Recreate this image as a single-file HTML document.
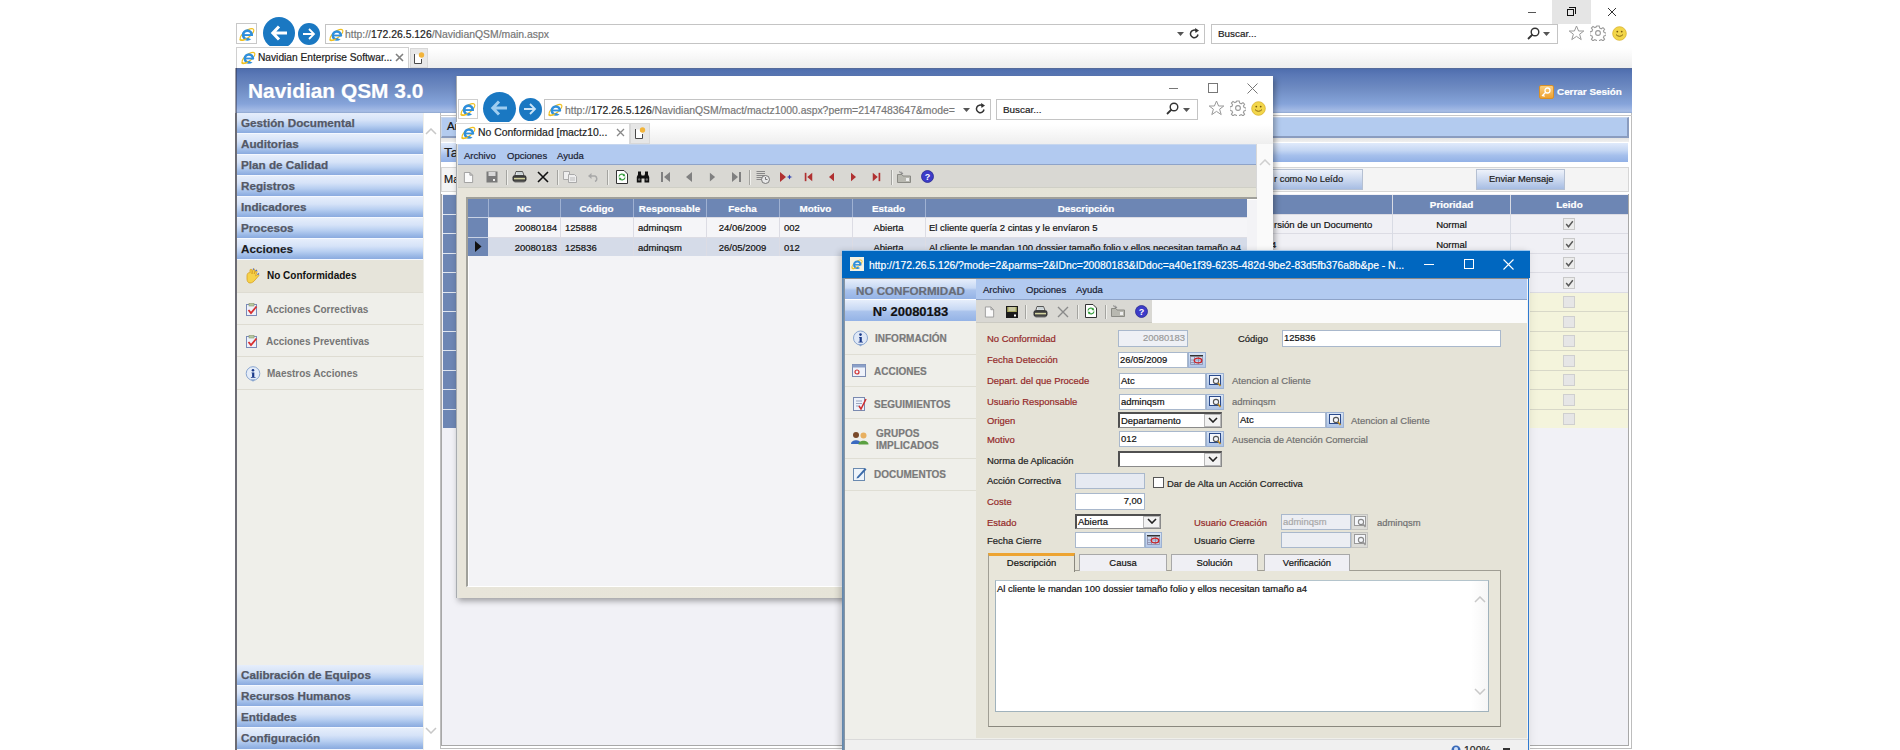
<!DOCTYPE html>
<html><head><meta charset="utf-8">
<style>
*{margin:0;padding:0;box-sizing:border-box}
html,body{width:1900px;height:750px;overflow:hidden;background:#fff;font-family:"Liberation Sans",sans-serif;position:relative}
.a{position:absolute}
.t{position:absolute;white-space:nowrap;-webkit-text-stroke:.2px currentColor}
svg{display:block}
/* main window */
#main{left:236px;top:0;width:1396px;height:750px;background:#fff}
.addr{border:1px solid #c4c4c4;background:#fff}
.circ{border-radius:50%;background:#1a78c2}
.sb{left:1px;width:186px;height:21px;background:linear-gradient(#e6eefb 0%,#d6e3f8 35%,#b8cff1 62%,#9ab8e6 85%,#8aaadf 100%);border-bottom:1px solid #f4f8ff}
.sb span{position:absolute;left:4px;top:3px;font-size:11.7px;font-weight:bold;color:#535866;-webkit-text-stroke:.25px #535866}
.sub{left:1px;width:186px;height:32px;background:#efefea;border-bottom:1px solid #dedcd2}
.sub span{position:absolute;left:29px;top:11px;font-size:10px;font-weight:bold;color:#767676}
</style></head><body>
<svg width="0" height="0" style="position:absolute">
<defs>
<mask id="iem" maskUnits="userSpaceOnUse" x="0" y="0" width="16" height="16"><rect width="16" height="16" fill="#fff"/><path d="M8.8 10.1H16V15L9.8 12.2Z" fill="#000"/></mask>
<symbol id="ie" viewBox="0 0 16 16">
<ellipse cx="8" cy="8.3" rx="8.2" ry="3.4" transform="rotate(-38 8 8.3)" fill="none" stroke="#f0c020" stroke-width="1.2"/>
<g mask="url(#iem)"><circle cx="8.4" cy="9" r="4.3" fill="none" stroke="#2f8fdc" stroke-width="2.7"/></g>
<rect x="4.6" y="8.1" width="8" height="1.9" fill="#2f8fdc"/>
<path d="M.6 13.2C1.5 15.2 4.5 14.6 7.5 12.6" fill="none" stroke="#f0c020" stroke-width="1.3"/>
</symbol>

<symbol id="i-new" viewBox="0 0 12 12"><path d="M1.5 .5H7.5L10.5 3.5V11.5H1.5Z M7.5 .5V3.5H10.5" fill="#fafafa" stroke="#9a9a9a" stroke-width="1"/></symbol>
<symbol id="i-save" viewBox="0 0 12 12"><rect x=".5" y=".5" width="11" height="11" fill="#7a7a7a"/><rect x="2.5" y="1" width="7" height="4" fill="#d8d8d8"/><rect x="7" y="8" width="2" height="2" fill="#eee"/></symbol>
<symbol id="i-saveg" viewBox="0 0 12 12"><rect x="0" y="0" width="12" height="12" fill="#1a1a1a"/><rect x="1.2" y="1" width="9.6" height="5" fill="#a8a860"/><rect x="2.5" y="1" width="7" height="4" fill="#c8c8a0"/><rect x="8" y="8.5" width="2" height="2" fill="#fff"/></symbol>
<symbol id="i-print" viewBox="0 0 15 12"><path d="M4 .5H10.5L12 4.5H2.8Z" fill="#eef0f4" stroke="#333" stroke-width=".8"/><path d="M5 1.8H10M4.6 3H10.6" stroke="#9aa" stroke-width=".6"/><rect x=".5" y="4.2" width="14" height="6.6" rx="2.2" fill="#3a3a3a"/><rect x="2" y="6.8" width="11" height="1.6" fill="#d4d4a0"/><rect x="2.5" y="9.6" width="10" height="1.8" fill="#5a5a5a"/></symbol>
<symbol id="i-x" viewBox="0 0 12 12"><path d="M1 1L11 11M11 1L1 11" stroke="#111" stroke-width="1.6"/></symbol>
<symbol id="i-xg" viewBox="0 0 12 12"><path d="M1 1L11 11M11 1L1 11" stroke="#8a8a8a" stroke-width="1.4"/></symbol>
<symbol id="i-copy" viewBox="0 0 14 12"><path d="M.5 .5H6.5V8.5H.5Z" fill="#eee" stroke="#aaa"/><path d="M5.5 3.5H11.5L13.5 5.5V11.5H5.5Z" fill="#eee" stroke="#aaa"/><path d="M7 7H12M7 9H12" stroke="#bbb"/></symbol>
<symbol id="i-undo" viewBox="0 0 11 9"><path d="M3 3H7A3 3 0 0 1 7 8.5" fill="none" stroke="#a8a8a8" stroke-width="1.5"/><path d="M0 3L3.5 0V6Z" fill="#a8a8a8"/></symbol>
<symbol id="i-refresh" viewBox="0 0 12 14"><path d="M.5 .5H8L11.5 4V13.5H.5Z" fill="#fff" stroke="#333"/><path d="M3 6.5A3 3 0 0 1 8.5 5.5M9 7.5A3 3 0 0 1 3.5 8.5" fill="none" stroke="#3aa040" stroke-width="1.3"/><path d="M8 3.5L9.5 6.5L6.5 6Z M4 10.5L2.5 7.5L5.5 8Z" fill="#3aa040"/></symbol>
<symbol id="i-bino" viewBox="0 0 14 12"><rect x="2" y=".5" width="3" height="3.5" fill="#111"/><rect x="9" y=".5" width="3" height="3.5" fill="#111"/><path d="M.8 11.5V6L2 3.5H5.5V11.5Z M13.2 11.5V6L12 3.5H8.5V11.5Z" fill="#111"/><rect x="5" y="4.5" width="4" height="3" fill="#111"/><circle cx="3.2" cy="8.5" r="1.2" fill="#666"/><circle cx="10.8" cy="8.5" r="1.2" fill="#666"/></symbol>
<symbol id="i-first" viewBox="0 0 9 12"><rect x="0" y="1" width="2" height="10" fill="#808080"/><path d="M9 1V11L3 6Z" fill="#808080"/></symbol><symbol id="r-first" viewBox="0 0 9 12"><rect x="0" y="1" width="2" height="10" fill="#b03030"/><path d="M9 1V11L3 6Z" fill="#b03030"/></symbol>
<symbol id="i-prev" viewBox="0 0 8 12"><path d="M7 1V11L1 6Z" fill="#808080"/></symbol><symbol id="r-prev" viewBox="0 0 8 12"><path d="M7 1V11L1 6Z" fill="#b03030"/></symbol>
<symbol id="i-next" viewBox="0 0 8 12"><path d="M1 1V11L7 6Z" fill="#808080"/></symbol><symbol id="r-next" viewBox="0 0 8 12"><path d="M1 1V11L7 6Z" fill="#b03030"/></symbol>
<symbol id="i-last" viewBox="0 0 9 12"><path d="M0 1V11L6 6Z" fill="#808080"/><rect x="7" y="1" width="2" height="10" fill="#808080"/></symbol><symbol id="r-last" viewBox="0 0 9 12"><path d="M0 1V11L6 6Z" fill="#b03030"/><rect x="7" y="1" width="2" height="10" fill="#b03030"/></symbol>
<symbol id="i-hist" viewBox="0 0 14 14"><path d="M.5 1.5H9M.5 3.5H9M.5 5.5H9M.5 7.5H6M.5 9.5H6" stroke="#888"/><circle cx="9.5" cy="9.5" r="4" fill="#e8e8e8" stroke="#777"/><path d="M9.5 7V9.5H11.5" fill="none" stroke="#777"/></symbol>
<symbol id="i-rnew" viewBox="0 0 14 12"><path d="M1 1V11L7 6Z" fill="#b03030"/><path d="M10.5 3.5L11.5 5.5L13.5 6L11.5 6.5L10.5 8.5L9.5 6.5L7.5 6L9.5 5.5Z" fill="#3040b0"/></symbol>
<symbol id="i-folder" viewBox="0 0 14 12"><path d="M.5 3.5H5L6 5H13.5V11.5H.5Z" fill="#b8b8b0" stroke="#8a8a84"/><path d="M2 .5L5 3M4 .5L6 3" stroke="#888"/><rect x="9" y="7" width="3" height="3" fill="#eee"/></symbol>
<symbol id="i-help" viewBox="0 0 13 13"><circle cx="6.5" cy="6.5" r="6" fill="#3c3cc8" stroke="#2a2a90" stroke-width=".8"/><text x="6.5" y="10" font-family="Liberation Sans" font-weight="bold" font-size="9" fill="#fff" text-anchor="middle">?</text></symbol>
</defs>
</svg>

<!-- ================= MAIN IE WINDOW ================= -->
<div id="main" class="a">
  <!-- window buttons -->
  <div class="a" style="left:1292px;top:12px;width:8px;height:1px;background:#555"></div>
  <div class="a" style="left:1316px;top:0;width:39px;height:24px;background:#e5e5e5"></div>
  <div class="a" style="left:1331px;top:9px;width:7px;height:7px;border:1px solid #111;background:#e5e5e5"></div>
  <div class="a" style="left:1333px;top:7px;width:7px;height:7px;border-top:1px solid #111;border-right:1px solid #111"></div>
  <svg class="a" style="left:1371px;top:7px" width="10" height="10"><path d="M1 1L9 9M9 1L1 9" stroke="#333" stroke-width="1"/></svg>
  <!-- toolbar -->
  <div class="a" style="left:0;top:23px;width:21px;height:21px;border:1px solid #c8c8c8;background:#fff"><svg class="a" style="left:2px;top:2px" width="16" height="16"><use href="#ie"/></svg></div>
  <div class="a circ" style="left:27px;top:17px;width:32px;height:32px"></div>
  <svg class="a" style="left:34px;top:24px" width="18" height="18"><path d="M9 2.5L2.8 9L9 15.5M3.2 9H17" fill="none" stroke="#fff" stroke-width="3"/></svg>
  <div class="a circ" style="left:62px;top:23px;width:22px;height:22px"></div>
  <svg class="a" style="left:66px;top:28px" width="14" height="12"><path d="M7 1L12 6L7 11M12 6H1" fill="none" stroke="#fff" stroke-width="1.8"/></svg>
  <div class="a addr" style="left:89px;top:24px;width:880px;height:20px"></div>
  <svg class="a" style="left:93px;top:27px" width="15" height="15"><use href="#ie"/></svg>
  <div class="t" style="left:109px;top:29px;font-size:10.4px;color:#777">http://<span style="color:#222">172.26.5.126</span>/NavidianQSM/main.aspx</div>
  <svg class="a" style="left:941px;top:32px" width="7" height="4"><path d="M0 0H7L3.5 4Z" fill="#555"/></svg>
  <svg class="a" style="left:953px;top:28px" width="11" height="12"><path d="M9 6.5A3.8 3.8 0 1 1 7.5 2.8" fill="none" stroke="#333" stroke-width="1.5"/><path d="M6 0L10 2.6L6.5 5Z" fill="#333"/></svg>
  <div class="a addr" style="left:975px;top:24px;width:347px;height:20px"></div>
  <div class="t" style="left:982px;top:28px;font-size:9.9px;color:#222">Buscar...</div>
  <svg class="a" style="left:1291px;top:27px" width="13" height="13"><circle cx="8" cy="5" r="3.8" fill="none" stroke="#333" stroke-width="1.4"/><path d="M5.5 7.5L1 12" stroke="#333" stroke-width="1.8"/></svg>
  <svg class="a" style="left:1307px;top:32px" width="7" height="4"><path d="M0 0H7L3.5 4Z" fill="#555"/></svg>
  <svg class="a" style="left:1332px;top:25px" width="17" height="16"><path d="M8.5 1L10.6 6H15.8L11.6 9.2L13.2 14.6L8.5 11.4L3.8 14.6L5.4 9.2L1.2 6H6.4Z" fill="none" stroke="#999" stroke-width="1"/></svg>
  <svg class="a" style="left:1354px;top:25px" width="16" height="16"><g fill="none" stroke="#999" stroke-width="1.1"><circle cx="8" cy="8" r="2.4"/><path d="M6.8 1h2.4l.4 2 1.6.8 1.8-1.2 1.6 1.6-1.2 1.8.8 1.6 2 .4v2.4l-2 .4-.8 1.6 1.2 1.8-1.6 1.6-1.8-1.2-1.6.8-.4 2H6.8l-.4-2-1.6-.8-1.8 1.2-1.6-1.6 1.2-1.8-.8-1.6-2-.4V6.8l2-.4.8-1.6L1.4 3l1.6-1.6 1.8 1.2 1.6-.8z"/></g></svg>
  <svg class="a" style="left:1376px;top:26px" width="15" height="15"><circle cx="7.5" cy="7.5" r="6.8" fill="#f2d64a" stroke="#d9b12a" stroke-width=".8"/><circle cx="5.3" cy="5.6" r=".9" fill="#7a5a10"/><circle cx="9.7" cy="5.6" r=".9" fill="#7a5a10"/><path d="M4 8.6Q7.5 12 11 8.6" fill="none" stroke="#7a5a10" stroke-width=".9"/></svg>
  <!-- tab -->
  <div class="a" style="left:0;top:46px;width:1396px;height:22px;background:linear-gradient(#fff 10%,#eeeeee)"></div>
  <div class="a" style="left:0;top:47px;width:173px;height:22px;border:1px solid #d0d0d0;border-bottom:none;background:#fff"></div>
  <svg class="a" style="left:5px;top:50px" width="15" height="15"><use href="#ie"/></svg>
  <div class="t" style="left:22px;top:52px;font-size:10.2px;color:#222">Navidian Enterprise Softwar...</div>
  <svg class="a" style="left:159px;top:53px" width="9" height="9"><path d="M1 1L8 8M8 1L1 8" stroke="#808080" stroke-width="1.6"/></svg>
  <div class="a" style="left:174px;top:48px;width:18px;height:20px;background:#e8e8e8;border:1px solid #d8d8d8"></div>
  <svg class="a" style="left:177px;top:51px" width="12" height="14"><path d="M1.5 3.5H8.5V12.5H1.5Z" fill="#fff"/><path d="M1.5 3V12.5H8.5V8" fill="none" stroke="#4a4a4a" stroke-width="1"/><circle cx="8.5" cy="4" r="2.7" fill="#f2b43a"/></svg>

  <!-- header -->
  <div class="a" style="left:0;top:68px;width:1396px;height:45px;background:linear-gradient(#5a6a90 0%,#4f6eae 3%,#5a78b6 15%,#6e8bc2 45%,#86a4da 80%,#a7bde6 96%,#8ea6ce 100%)"></div>
  <div class="t" style="left:12px;top:79px;font-size:20.9px;font-weight:bold;color:#fff">Navidian QSM 3.0</div>
  <div class="a" style="left:1303px;top:85px;width:15px;height:14px;background:linear-gradient(#fcd080,#eda030);border:1px solid #d89028;border-radius:2px"></div>
  <svg class="a" style="left:1305px;top:87px" width="10" height="10"><circle cx="6.5" cy="3.5" r="2.5" fill="none" stroke="#fff" stroke-width="1.3"/><path d="M5 5L1 9M2 8L3.5 9.5" stroke="#fff" stroke-width="1.3"/></svg>
  <div class="t" style="left:1321px;top:86px;font-size:9.9px;font-weight:bold;color:#fff">Cerrar Sesión</div>

  <!-- sidebar -->
  <div class="a" style="left:-1px;top:68px;width:2px;height:45px;background:rgba(40,40,60,.45)"></div>
  <div class="a" style="left:-1px;top:113px;width:189px;height:637px;background:#efefea;border-left:2px solid #6c6c74"></div>
  <div class="a sb" style="top:113px"><span>Gestión Documental</span></div>
  <div class="a sb" style="top:134px"><span>Auditorias</span></div>
  <div class="a sb" style="top:155px"><span>Plan de Calidad</span></div>
  <div class="a sb" style="top:176px"><span>Registros</span></div>
  <div class="a sb" style="top:197px"><span>Indicadores</span></div>
  <div class="a sb" style="top:218px"><span>Procesos</span></div>
  <div class="a sb" style="top:239px"><span style="color:#111">Acciones</span></div>
  <div class="a sub" style="top:260px;height:33px;background:#e6e4da"><span style="color:#111;top:10px;left:30px">No Conformidades</span></div>
  <div class="a sub" style="top:293px"><span>Acciones Correctivas</span></div>
  <div class="a sub" style="top:325px"><span>Acciones Preventivas</span></div>
  <div class="a sub" style="top:357px;height:33px"><span style="left:30px">Maestros Acciones</span></div>
  <svg class="a" style="left:9px;top:268px" width="16" height="16"><path d="M2 8C2 5 4 4 5 5V2C5 1 7 1 7 2V6L8 1.5C8.5 .5 10 1 9.8 2L9.2 6L10.5 3C11 2 12.5 2.5 12 3.8L10.5 8L12.5 6.5C13.5 6 14.5 7 13.5 8L10 12C9 13.5 7 15 5 15C3 15 2 13 2 11Z" fill="#f6d24a" stroke="#d8a020" stroke-width=".8"/><path d="M8 1.5L9 .8M10.5 3L12 2M12.5 6.5L14 5.5" stroke="#4a6ad0" stroke-width="1.2"/></svg>
  <svg class="a" style="left:10px;top:303px" width="12" height="13"><rect x=".5" y="1.5" width="10" height="11" fill="#eef2fa" stroke="#7a8ab8"/><rect x="3" y=".5" width="5" height="2.5" fill="#b8c8a0" stroke="#8a9a70" stroke-width=".6"/><path d="M2.5 7L5 10L10.5 3.5" fill="none" stroke="#d83030" stroke-width="1.8"/></svg>
  <svg class="a" style="left:10px;top:335px" width="12" height="13"><rect x=".5" y="1.5" width="10" height="11" fill="#eef2fa" stroke="#7a8ab8"/><rect x="3" y=".5" width="5" height="2.5" fill="#b8c8a0" stroke="#8a9a70" stroke-width=".6"/><path d="M2.5 7L5 10L10.5 3.5" fill="none" stroke="#d83030" stroke-width="1.8"/></svg>
  <svg class="a" style="left:9px;top:366px" width="16" height="16"><circle cx="8" cy="7.5" r="6.8" fill="#e4ecf8" stroke="#8aa6d0" stroke-width="1"/><path d="M5.5 13.5L8 15.8L10.5 13.5" fill="#8aa6d0"/><circle cx="8" cy="4.2" r="1.3" fill="#1a3a8a"/><path d="M6.5 6.5H9.3V11H10.5V11.8H5.9V11H7.1V7.3H6.5Z" fill="#1a3a8a"/></svg>
  <div class="a sb" style="top:665px"><span>Calibración de Equipos</span></div>
  <div class="a sb" style="top:686px"><span>Recursos Humanos</span></div>
  <div class="a sb" style="top:707px"><span>Entidades</span></div>
  <div class="a sb" style="top:728px;height:22px"><span>Configuración</span></div>

  <!-- scroll strip -->
  <svg class="a" style="left:189px;top:128px" width="12" height="7"><path d="M1 6L6 1L11 6" fill="none" stroke="#c8c8c8" stroke-width="1.5"/></svg>
  <svg class="a" style="left:189px;top:727px" width="12" height="7"><path d="M1 1L6 6L11 1" fill="none" stroke="#c8c8c8" stroke-width="1.5"/></svg>

  <!-- content frame -->
  <div class="a" style="left:204px;top:113px;width:1192px;height:636px;border:1px solid #bdbdbd;border-top:none;background:#fff"></div>
  <div class="a" style="left:204px;top:115px;width:1192px;height:1px;background:#c8c8c8"></div>
  <div class="a" style="left:205px;top:137px;width:1188px;height:5px;background:linear-gradient(#e0e0e0,#f0f0f0)"></div>
  <div class="a" style="left:205px;top:117px;width:1188px;height:21px;background:#b3cbef;border:1px solid #c8d6ec;border-right:2px solid #8a9cbf;border-bottom:2px solid #8a9cbf"></div>
  <div class="t" style="left:211px;top:120px;font-size:11.5px;color:#111">Archivo</div>
  <div class="a" style="left:205px;top:143px;width:1187px;height:19px;background:linear-gradient(#e0eafb,#c4d6f3 40%,#a6c0ec 65%,#92b1e6)"></div>
  <div class="t" style="left:208px;top:145px;font-size:13.5px;color:#222">Tareas</div>
  <div class="a" style="left:205px;top:167px;width:1188px;height:25px;background:#f4f4f4;border:1px solid #d6d6d6"></div>
  <div class="t" style="left:208px;top:173px;font-size:11px;color:#111">Marcar</div>
  <div class="a" style="left:1000px;top:169px;width:127px;height:21px;border:1px solid #b5c0d2;background:linear-gradient(#eef2fa,#c8d6ee 55%,#a7bde3)"></div>
  <div class="t" style="left:1038px;top:174px;font-size:9.35px;color:#222">r como No Leído</div>
  <div class="a" style="left:1240px;top:169px;width:89px;height:21px;border:1px solid #b5c0d2;background:linear-gradient(#eef2fa,#c8d6ee 55%,#a7bde3)"></div>
  <div class="t" style="left:1253px;top:174px;font-size:9.35px;color:#222">Enviar Mensaje</div>
  <!-- table -->
  <div class="a" style="left:205px;top:194px;width:1188px;height:552px;background:#f1f1f6;border:1px solid #a8a8a8;border-top:none"></div>
  <div class="a" style="left:207px;top:195px;width:1185px;height:19px;background:#6d86b4"></div>
  <div class="a" style="left:1156px;top:195px;width:1px;height:233px;background:#d8dbe4"></div>
  <div class="a" style="left:1274px;top:195px;width:1px;height:233px;background:#d8dbe4"></div>
  <div class="t" style="left:1157px;top:199px;width:117px;text-align:center;font-size:9.9px;font-weight:bold;color:#fff">Prioridad</div>
  <div class="t" style="left:1275px;top:199px;width:117px;text-align:center;font-size:9.9px;font-weight:bold;color:#fff">Leido</div>
  <div class="a" style="left:220px;top:214px;width:1172px;height:19px;background:#f0f0f5;border-top:1px solid #dcdce4"></div>
  <div class="a" style="left:207px;top:214px;width:13px;height:19px;background:#6d86b4;border-top:1px solid #e0e6f0"></div>
  <div class="a" style="left:1327px;top:218px;width:12px;height:12px;border:1px solid #c8c8c8;background:#ececec"></div><svg class="a" style="left:1329px;top:220px" width="9" height="8"><path d="M1.2 4L3.5 6.8L7.8 1.2" fill="none" stroke="#585858" stroke-width="1.4"/></svg>
  <div class="a" style="left:220px;top:233px;width:1172px;height:20px;background:#f0f0f5;border-top:1px solid #dcdce4"></div>
  <div class="a" style="left:207px;top:233px;width:13px;height:20px;background:#6d86b4;border-top:1px solid #e0e6f0"></div>
  <div class="a" style="left:1327px;top:238px;width:12px;height:12px;border:1px solid #c8c8c8;background:#ececec"></div><svg class="a" style="left:1329px;top:240px" width="9" height="8"><path d="M1.2 4L3.5 6.8L7.8 1.2" fill="none" stroke="#585858" stroke-width="1.4"/></svg>
  <div class="a" style="left:220px;top:253px;width:1172px;height:19px;background:#f0f0f5;border-top:1px solid #dcdce4"></div>
  <div class="a" style="left:207px;top:253px;width:13px;height:19px;background:#6d86b4;border-top:1px solid #e0e6f0"></div>
  <div class="a" style="left:1327px;top:257px;width:12px;height:12px;border:1px solid #c8c8c8;background:#ececec"></div><svg class="a" style="left:1329px;top:259px" width="9" height="8"><path d="M1.2 4L3.5 6.8L7.8 1.2" fill="none" stroke="#585858" stroke-width="1.4"/></svg>
  <div class="a" style="left:220px;top:272px;width:1172px;height:20px;background:#f0f0f5;border-top:1px solid #dcdce4"></div>
  <div class="a" style="left:207px;top:272px;width:13px;height:20px;background:#6d86b4;border-top:1px solid #e0e6f0"></div>
  <div class="a" style="left:1327px;top:277px;width:12px;height:12px;border:1px solid #c8c8c8;background:#ececec"></div><svg class="a" style="left:1329px;top:279px" width="9" height="8"><path d="M1.2 4L3.5 6.8L7.8 1.2" fill="none" stroke="#585858" stroke-width="1.4"/></svg>
  <div class="a" style="left:220px;top:292px;width:1172px;height:19px;background:#f4f4dc;border-top:1px solid #dcdce4"></div>
  <div class="a" style="left:207px;top:292px;width:13px;height:19px;background:#6d86b4;border-top:1px solid #e0e6f0"></div>
  <div class="a" style="left:1327px;top:296px;width:12px;height:12px;border:1px solid #cfcfcf;background:#e6e6e6"></div>
  <div class="a" style="left:220px;top:311px;width:1172px;height:20px;background:#f4f4dc;border-top:1px solid #d8d8c8"></div>
  <div class="a" style="left:207px;top:311px;width:13px;height:20px;background:#6d86b4;border-top:1px solid #e0e6f0"></div>
  <div class="a" style="left:1327px;top:316px;width:12px;height:12px;border:1px solid #cfcfcf;background:#e6e6e6"></div>
  <div class="a" style="left:220px;top:331px;width:1172px;height:19px;background:#f4f4dc;border-top:1px solid #d8d8c8"></div>
  <div class="a" style="left:207px;top:331px;width:13px;height:19px;background:#6d86b4;border-top:1px solid #e0e6f0"></div>
  <div class="a" style="left:1327px;top:335px;width:12px;height:12px;border:1px solid #cfcfcf;background:#e6e6e6"></div>
  <div class="a" style="left:220px;top:350px;width:1172px;height:20px;background:#f4f4dc;border-top:1px solid #d8d8c8"></div>
  <div class="a" style="left:207px;top:350px;width:13px;height:20px;background:#6d86b4;border-top:1px solid #e0e6f0"></div>
  <div class="a" style="left:1327px;top:355px;width:12px;height:12px;border:1px solid #cfcfcf;background:#e6e6e6"></div>
  <div class="a" style="left:220px;top:370px;width:1172px;height:19px;background:#f4f4dc;border-top:1px solid #d8d8c8"></div>
  <div class="a" style="left:207px;top:370px;width:13px;height:19px;background:#6d86b4;border-top:1px solid #e0e6f0"></div>
  <div class="a" style="left:1327px;top:374px;width:12px;height:12px;border:1px solid #cfcfcf;background:#e6e6e6"></div>
  <div class="a" style="left:220px;top:389px;width:1172px;height:20px;background:#f4f4dc;border-top:1px solid #d8d8c8"></div>
  <div class="a" style="left:207px;top:389px;width:13px;height:20px;background:#6d86b4;border-top:1px solid #e0e6f0"></div>
  <div class="a" style="left:1327px;top:394px;width:12px;height:12px;border:1px solid #cfcfcf;background:#e6e6e6"></div>
  <div class="a" style="left:220px;top:409px;width:1172px;height:19px;background:#f4f4dc;border-top:1px solid #d8d8c8"></div>
  <div class="a" style="left:207px;top:409px;width:13px;height:19px;background:#6d86b4;border-top:1px solid #e0e6f0"></div>
  <div class="a" style="left:1327px;top:413px;width:12px;height:12px;border:1px solid #cfcfcf;background:#e6e6e6"></div>
  <div class="a" style="left:1156px;top:195px;width:1px;height:233px;background:#d8dbe4"></div>
  <div class="a" style="left:1274px;top:195px;width:1px;height:233px;background:#d8dbe4"></div>
  <div class="t" style="left:1038px;top:219px;font-size:9.5px;color:#111">rsión de un Documento</div>
  <div class="t" style="left:1035px;top:239px;font-size:9.5px;color:#111">4</div>
  <div class="t" style="left:1157px;top:219px;width:117px;text-align:center;font-size:9.5px;color:#111">Normal</div>
  <div class="t" style="left:1157px;top:239px;width:117px;text-align:center;font-size:9.5px;color:#111">Normal</div>
</div>

<!-- ================= MIDDLE IE WINDOW ================= -->
<div id="mid" class="a" style="left:456px;top:76px;width:817px;height:522px;background:#fff;box-shadow:2px 3px 6px rgba(0,0,0,.35)">
  <div class="a" style="left:0;top:0;width:1px;height:522px;background:#a8acb0"></div>
  <!-- window buttons -->
  <div class="a" style="left:713px;top:12px;width:9px;height:1px;background:#777"></div>
  <div class="a" style="left:752px;top:7px;width:10px;height:10px;border:1px solid #777"></div>
  <svg class="a" style="left:791px;top:7px" width="11" height="11"><path d="M.5 .5L10.5 10.5M10.5 .5L.5 10.5" stroke="#777" stroke-width="1"/></svg>
  <!-- toolbar -->
  <div class="a" style="left:2px;top:23px;width:20px;height:20px;border:1px solid #cfcfcf;background:#fff"><svg class="a" style="left:1px;top:1px" width="16" height="16"><use href="#ie"/></svg></div>
  <div class="a circ" style="left:27px;top:16px;width:33px;height:33px"></div>
  <svg class="a" style="left:34px;top:23px" width="18" height="18"><path d="M9 2.5L2.8 9L9 15.5M3.2 9H17" fill="none" stroke="#9fcdf0" stroke-width="3"/></svg>
  <div class="a circ" style="left:63px;top:22px;width:23px;height:23px"></div>
  <svg class="a" style="left:67px;top:27px" width="14" height="12"><path d="M7 1L12 6L7 11M12 6H1" fill="none" stroke="#c9e3f6" stroke-width="1.8"/></svg>
  <div class="a addr" style="left:88px;top:23px;width:447px;height:21px"></div>
  <svg class="a" style="left:92px;top:26px" width="15" height="15"><use href="#ie"/></svg>
  <div class="a" style="left:109px;top:24px;width:390px;height:19px;overflow:hidden"><div class="t" style="left:0;top:5px;font-size:10.4px;color:#777">http://<span style="color:#222">172.26.5.126</span>/NavidianQSM/mact/mactz1000.aspx?perm=2147483647&amp;mode=-1</div></div>
  <svg class="a" style="left:507px;top:32px" width="7" height="4"><path d="M0 0H7L3.5 4Z" fill="#555"/></svg>
  <svg class="a" style="left:519px;top:27px" width="11" height="12"><path d="M9 6.5A3.8 3.8 0 1 1 7.5 2.8" fill="none" stroke="#333" stroke-width="1.5"/><path d="M6 0L10 2.6L6.5 5Z" fill="#333"/></svg>
  <div class="a addr" style="left:540px;top:23px;width:202px;height:21px"></div>
  <div class="t" style="left:547px;top:28px;font-size:9.9px;color:#222">Buscar...</div>
  <svg class="a" style="left:710px;top:26px" width="13" height="13"><circle cx="8" cy="5" r="3.8" fill="none" stroke="#333" stroke-width="1.4"/><path d="M5.5 7.5L1 12" stroke="#333" stroke-width="1.8"/></svg>
  <svg class="a" style="left:727px;top:32px" width="7" height="4"><path d="M0 0H7L3.5 4Z" fill="#555"/></svg>
  <svg class="a" style="left:752px;top:24px" width="17" height="16"><path d="M8.5 1L10.6 6H15.8L11.6 9.2L13.2 14.6L8.5 11.4L3.8 14.6L5.4 9.2L1.2 6H6.4Z" fill="none" stroke="#999" stroke-width="1"/></svg>
  <svg class="a" style="left:774px;top:24px" width="16" height="16"><g fill="none" stroke="#999" stroke-width="1.1"><circle cx="8" cy="8" r="2.4"/><path d="M6.8 1h2.4l.4 2 1.6.8 1.8-1.2 1.6 1.6-1.2 1.8.8 1.6 2 .4v2.4l-2 .4-.8 1.6 1.2 1.8-1.6 1.6-1.8-1.2-1.6.8-.4 2H6.8l-.4-2-1.6-.8-1.8 1.2-1.6-1.6 1.2-1.8-.8-1.6-2-.4V6.8l2-.4.8-1.6L1.4 3l1.6-1.6 1.8 1.2 1.6-.8z"/></g></svg>
  <svg class="a" style="left:795px;top:25px" width="15" height="15"><circle cx="7.5" cy="7.5" r="6.8" fill="#f2d64a" stroke="#d9b12a" stroke-width=".8"/><circle cx="5.3" cy="5.6" r=".9" fill="#7a5a10"/><circle cx="9.7" cy="5.6" r=".9" fill="#7a5a10"/><path d="M4 8.6Q7.5 12 11 8.6" fill="none" stroke="#7a5a10" stroke-width=".9"/></svg>
  <!-- tab -->
  <div class="a" style="left:0;top:46px;width:817px;height:22px;background:linear-gradient(#fff 10%,#eeeeee)"></div>
  <div class="a" style="left:0;top:47px;width:174px;height:21px;border:1px solid #d8d8d8;border-left:none;border-bottom:none;background:#fff"></div>
  <svg class="a" style="left:5px;top:49px" width="15" height="15"><use href="#ie"/></svg>
  <div class="t" style="left:22px;top:51px;font-size:10.4px;color:#222">No Conformidad [mactz10...</div>
  <svg class="a" style="left:160px;top:52px" width="9" height="9"><path d="M1 1L8 8M8 1L1 8" stroke="#888" stroke-width="1.3"/></svg>
  <div class="a" style="left:174px;top:47px;width:20px;height:21px;background:#e6e6e6;border:1px solid #d8d8d8"></div>
  <svg class="a" style="left:178px;top:50px" width="12" height="14"><path d="M1.5 3.5H8.5V12.5H1.5Z" fill="#fff"/><path d="M1.5 3V12.5H8.5V8" fill="none" stroke="#4a4a4a" stroke-width="1"/><circle cx="8.5" cy="4" r="2.7" fill="#f2b43a"/></svg>
  <!-- page content -->
  <div class="a" style="left:1px;top:68px;width:800px;height:454px;background:linear-gradient(90deg,#e4e4e0,#e8e5da 3px,#e4e3d6)"></div>
  <div class="a" style="left:2px;top:68px;width:799px;height:21px;background:#b2caf0;border-top:1px solid #c6d6ee;border-bottom:1px solid #8ea3c8"></div>
  <div class="t" style="left:8px;top:74px;font-size:9.5px;color:#1a2233">Archivo</div>
  <div class="t" style="left:51px;top:74px;font-size:9.5px;color:#1a2233">Opciones</div>
  <div class="t" style="left:101px;top:74px;font-size:9.5px;color:#1a2233">Ayuda</div>
  <div class="a" style="left:2px;top:89px;width:799px;height:23px;background:#d9d8d3;border-bottom:1px solid #cfcfc6"></div>
  <svg class="a" style="left:7px;top:96px" width="11" height="11"><use href="#i-new"/></svg>
  <svg class="a" style="left:30px;top:95px" width="12" height="12"><use href="#i-save"/></svg>
  <div class="a" style="left:50px;top:94px;width:2px;height:15px;background:#a4a4a0;border-right:1px solid #f0f0ec"></div>
  <svg class="a" style="left:56px;top:95px" width="15" height="12"><use href="#i-print"/></svg>
  <svg class="a" style="left:81px;top:95px" width="12" height="12"><use href="#i-x"/></svg>
  <div class="a" style="left:101px;top:94px;width:2px;height:15px;background:#a4a4a0;border-right:1px solid #f0f0ec"></div>
  <svg class="a" style="left:107px;top:95px" width="14" height="12"><use href="#i-copy"/></svg>
  <svg class="a" style="left:132px;top:97px" width="11" height="9"><use href="#i-undo"/></svg>
  <div class="a" style="left:151px;top:94px;width:2px;height:15px;background:#a4a4a0;border-right:1px solid #f0f0ec"></div>
  <svg class="a" style="left:160px;top:94px" width="12" height="14"><use href="#i-refresh"/></svg>
  <svg class="a" style="left:180px;top:95px" width="14" height="12"><use href="#i-bino"/></svg>
  <svg class="a" style="left:205px;top:95px" width="9" height="12"><use href="#i-first"/></svg>
  <svg class="a" style="left:229px;top:95px" width="8" height="12"><use href="#i-prev"/></svg>
  <svg class="a" style="left:253px;top:95px" width="7" height="12"><use href="#i-next"/></svg>
  <svg class="a" style="left:276px;top:95px" width="9" height="12"><use href="#i-last"/></svg>
  <div class="a" style="left:293px;top:94px;width:2px;height:15px;background:#a4a4a0;border-right:1px solid #f0f0ec"></div>
  <svg class="a" style="left:300px;top:94px" width="14" height="14"><use href="#i-hist"/></svg>
  <svg class="a" style="left:323px;top:95px" width="14" height="12"><use href="#i-rnew"/></svg>
  <svg class="a" style="left:348px;top:96px" width="9" height="10"><use href="#r-first"/></svg>
  <svg class="a" style="left:372px;top:96px" width="7" height="10"><use href="#r-prev"/></svg>
  <svg class="a" style="left:394px;top:96px" width="7" height="10"><use href="#r-next"/></svg>
  <svg class="a" style="left:416px;top:96px" width="9" height="10"><use href="#r-last"/></svg>
  <div class="a" style="left:435px;top:94px;width:2px;height:15px;background:#a4a4a0;border-right:1px solid #f0f0ec"></div>
  <svg class="a" style="left:441px;top:95px" width="14" height="12"><use href="#i-folder"/></svg>
  <svg class="a" style="left:465px;top:94px" width="13" height="13"><use href="#i-help"/></svg>
  <div class="a" style="left:800px;top:68px;width:17px;height:454px;background:#fafafa;border-left:1px solid #d8d8d8"></div>
  <svg class="a" style="left:803px;top:83px" width="12" height="7"><path d="M1 6L6 1L11 6" fill="none" stroke="#cfcfcf" stroke-width="1.5"/></svg>
  <!-- inner frame -->
  <div class="a" style="left:10px;top:121px;width:791px;height:390px;background:#f3f3f6;border-left:2px solid #a0a09a;border-top:2px solid #a0a09a;border-bottom:1px solid #fff;box-shadow:inset 1px 1px 0 #fff"></div>
  <div class="a" style="left:12px;top:123px;width:779px;height:18px;background:#6d86b4"></div>
  <div class="a" style="left:32px;top:123px;width:1px;height:18px;background:#9fb1d2"></div>
  <div class="t" style="left:32px;top:127px;width:72px;text-align:center;font-size:9.9px;font-weight:bold;color:#fff">NC</div>
  <div class="a" style="left:104px;top:123px;width:1px;height:18px;background:#9fb1d2"></div>
  <div class="t" style="left:104px;top:127px;width:73px;text-align:center;font-size:9.9px;font-weight:bold;color:#fff">Código</div>
  <div class="a" style="left:177px;top:123px;width:1px;height:18px;background:#9fb1d2"></div>
  <div class="t" style="left:177px;top:127px;width:73px;text-align:center;font-size:9.9px;font-weight:bold;color:#fff">Responsable</div>
  <div class="a" style="left:250px;top:123px;width:1px;height:18px;background:#9fb1d2"></div>
  <div class="t" style="left:250px;top:127px;width:73px;text-align:center;font-size:9.9px;font-weight:bold;color:#fff">Fecha</div>
  <div class="a" style="left:323px;top:123px;width:1px;height:18px;background:#9fb1d2"></div>
  <div class="t" style="left:323px;top:127px;width:73px;text-align:center;font-size:9.9px;font-weight:bold;color:#fff">Motivo</div>
  <div class="a" style="left:396px;top:123px;width:1px;height:18px;background:#9fb1d2"></div>
  <div class="t" style="left:396px;top:127px;width:73px;text-align:center;font-size:9.9px;font-weight:bold;color:#fff">Estado</div>
  <div class="a" style="left:469px;top:123px;width:1px;height:18px;background:#9fb1d2"></div>
  <div class="t" style="left:469px;top:127px;width:322px;text-align:center;font-size:9.9px;font-weight:bold;color:#fff">Descripción</div>
  <div class="a" style="left:12px;top:141px;width:20px;height:20px;background:#6d86b4;border-top:1px solid #c8d2e4"></div>
  <div class="a" style="left:32px;top:141px;width:759px;height:20px;background:#f5f5f8;border-top:1px solid #dcdce4"></div>
  <div class="a" style="left:104px;top:141px;width:1px;height:20px;background:#dcdce4"></div>
  <div class="a" style="left:177px;top:141px;width:1px;height:20px;background:#dcdce4"></div>
  <div class="a" style="left:250px;top:141px;width:1px;height:20px;background:#dcdce4"></div>
  <div class="a" style="left:323px;top:141px;width:1px;height:20px;background:#dcdce4"></div>
  <div class="a" style="left:396px;top:141px;width:1px;height:20px;background:#dcdce4"></div>
  <div class="a" style="left:469px;top:141px;width:1px;height:20px;background:#dcdce4"></div>
  <div class="t" style="left:32px;top:146px;width:69px;text-align:right;font-size:9.5px;color:#111">20080184</div>
  <div class="t" style="left:109px;top:146px;font-size:9.5px;color:#111">125888</div>
  <div class="t" style="left:182px;top:146px;font-size:9.5px;color:#111">adminqsm</div>
  <div class="t" style="left:250px;top:146px;width:73px;text-align:center;font-size:9.5px;color:#111">24/06/2009</div>
  <div class="t" style="left:328px;top:146px;font-size:9.5px;color:#111">002</div>
  <div class="t" style="left:396px;top:146px;width:73px;text-align:center;font-size:9.5px;color:#111">Abierta</div>
  <div class="t" style="left:473px;top:146px;font-size:9.5px;color:#111">El cliente quería 2 cintas y le envíaron 5</div>
  <div class="a" style="left:12px;top:161px;width:20px;height:19px;background:#6d86b4;border-top:1px solid #c8d2e4"></div>
  <div class="a" style="left:32px;top:161px;width:759px;height:19px;background:#d5dbe8;border-top:1px solid #dcdce4"></div>
  <div class="a" style="left:104px;top:161px;width:1px;height:19px;background:#dcdce4"></div>
  <div class="a" style="left:177px;top:161px;width:1px;height:19px;background:#dcdce4"></div>
  <div class="a" style="left:250px;top:161px;width:1px;height:19px;background:#dcdce4"></div>
  <div class="a" style="left:323px;top:161px;width:1px;height:19px;background:#dcdce4"></div>
  <div class="a" style="left:396px;top:161px;width:1px;height:19px;background:#dcdce4"></div>
  <div class="a" style="left:469px;top:161px;width:1px;height:19px;background:#dcdce4"></div>
  <div class="t" style="left:32px;top:166px;width:69px;text-align:right;font-size:9.5px;color:#111">20080183</div>
  <div class="t" style="left:109px;top:166px;font-size:9.5px;color:#111">125836</div>
  <div class="t" style="left:182px;top:166px;font-size:9.5px;color:#111">adminqsm</div>
  <div class="t" style="left:250px;top:166px;width:73px;text-align:center;font-size:9.5px;color:#111">26/05/2009</div>
  <div class="t" style="left:328px;top:166px;font-size:9.5px;color:#111">012</div>
  <div class="t" style="left:396px;top:166px;width:73px;text-align:center;font-size:9.5px;color:#111">Abierta</div>
  <div class="t" style="left:473px;top:166px;font-size:9.5px;color:#111">Al cliente le mandan 100 dossier tamaño folio y ellos necesitan tamaño a4</div>
  <svg class="a" style="left:19px;top:165px" width="7" height="11"><path d="M0 0V11L6.5 5.5Z" fill="#111"/></svg>
</div>

<!-- ================= POPUP WINDOW ================= -->
<div id="pop" class="a" style="left:842px;top:251px;width:688px;height:499px;background:#efefea;box-shadow:-3px 0 6px rgba(0,0,0,.18)">
  <div class="a" style="left:0;top:0;width:3px;height:499px;background:linear-gradient(90deg,#5e84ab,#6f8fb0 60%,#9a9a9a)"></div>
  <div class="a" style="left:686px;top:0;width:1px;height:499px;background:#2f7ad0;box-shadow:3px 0 6px rgba(0,0,0,.15)"></div>
  <div class="a" style="left:685px;top:27px;width:1px;height:472px;background:#f4f4f4"></div>
  <div class="a" style="left:0;top:-1px;width:688px;height:28px;background:#0067c0;border-top:1px solid #9cc6ee"></div>
  <div class="a" style="left:8px;top:6px;width:14px;height:14px;background:#f4f2e2"><svg class="a" style="left:1px;top:1px" width="12" height="12"><use href="#ie"/></svg></div>
  <div class="t" style="left:27px;top:9px;font-size:10.34px;color:#fff">http://172.26.5.126/?mode=2&amp;parms=2&amp;IDnc=20080183&amp;IDdoc=a40e1f39-6235-482d-9be2-83d5fb376a8b&amp;pe - N...</div>
  <div class="a" style="left:582px;top:13px;width:10px;height:1px;background:#fff"></div>
  <div class="a" style="left:622px;top:8px;width:10px;height:10px;border:1px solid #fff"></div>
  <svg class="a" style="left:661px;top:8px" width="11" height="11"><path d="M.5 .5L10.5 10.5M10.5 .5L.5 10.5" stroke="#fff" stroke-width="1.1"/></svg>
  <div class="a" style="left:3px;top:27px;width:683px;height:1px;background:#8a8a8a"></div>
  <div class="a" style="left:3px;top:28px;width:131px;height:21px;background:linear-gradient(#e6eefb,#c8d9f4 45%,#aac3ec 55%,#94b3e6);border-bottom:1px solid #fff"></div>
  <div class="t" style="left:3px;top:33px;width:131px;text-align:center;font-size:11.6px;font-weight:bold;color:#676c76">NO CONFORMIDAD</div>
  <div class="a" style="left:3px;top:49px;width:131px;height:21px;background:linear-gradient(#e6eefb,#c8d9f4 45%,#aac3ec 55%,#94b3e6)"></div>
  <div class="t" style="left:3px;top:53px;width:131px;text-align:center;font-size:13px;font-weight:bold;color:#111">Nº 20080183</div>
  <div class="a" style="left:3px;top:70px;width:131px;height:34px;border-bottom:1px solid #dfded4"></div>
  <div class="t" style="left:33px;top:82px;font-size:10px;font-weight:bold;color:#7a7a7a;line-height:11.5px">INFORMACIÓN</div>
  <div class="a" style="left:3px;top:104px;width:131px;height:32px;border-bottom:1px solid #dfded4"></div>
  <div class="t" style="left:32px;top:115px;font-size:10px;font-weight:bold;color:#7a7a7a;line-height:11.5px">ACCIONES</div>
  <div class="a" style="left:3px;top:136px;width:131px;height:32px;border-bottom:1px solid #dfded4"></div>
  <div class="t" style="left:32px;top:148px;font-size:10px;font-weight:bold;color:#7a7a7a;line-height:11.5px">SEGUIMIENTOS</div>
  <div class="a" style="left:3px;top:168px;width:131px;height:40px;border-bottom:1px solid #dfded4"></div>
  <div class="t" style="left:34px;top:177px;font-size:10px;font-weight:bold;color:#7a7a7a;line-height:11.5px">GRUPOS<br>IMPLICADOS</div>
  <div class="a" style="left:3px;top:208px;width:131px;height:32px;border-bottom:1px solid #dfded4"></div>
  <div class="t" style="left:32px;top:218px;font-size:10px;font-weight:bold;color:#7a7a7a;line-height:11.5px">DOCUMENTOS</div>
  <svg class="a" style="left:10px;top:79px" width="17" height="17"><circle cx="8.5" cy="8" r="7" fill="#dfe8f6" stroke="#8aa6d0" stroke-width="1"/><path d="M6 14L8.5 16.5L11 14" fill="#8aa6d0"/><circle cx="8.5" cy="4.6" r="1.3" fill="#1a3a8a"/><path d="M7 7H9.8V11.8H11V12.6H6.4V11.8H7.6V7.8H7Z" fill="#1a3a8a"/></svg>
  <svg class="a" style="left:10px;top:113px" width="14" height="13"><rect x=".5" y=".5" width="13" height="12" fill="#eef2fa" stroke="#7a8ab0"/><rect x=".5" y=".5" width="13" height="3" fill="#8aa0c8"/><circle cx="5" cy="8" r="2" fill="none" stroke="#d03030" stroke-width="1.2"/></svg>
  <svg class="a" style="left:11px;top:145px" width="14" height="15"><rect x=".5" y="1.5" width="11" height="13" fill="#eef2fa" stroke="#7a8ab0"/><path d="M3 5H9M3 7.5H9M3 10H7" stroke="#9aa6c0"/><path d="M6 10L8 13L13 3" fill="none" stroke="#d03030" stroke-width="1.6"/></svg>
  <svg class="a" style="left:9px;top:180px" width="18" height="14"><circle cx="5" cy="4" r="3" fill="#7a4a2a"/><path d="M0 13C0 8 10 8 10 13Z" fill="#3a6ac0"/><circle cx="12.5" cy="4.5" r="3" fill="#e8b060"/><path d="M7.5 13.5C7.5 8.5 17.5 8.5 17.5 13.5Z" fill="#5aa040"/></svg>
  <svg class="a" style="left:11px;top:215px" width="14" height="15"><rect x=".5" y="2.5" width="11" height="12" fill="#eef4fa" stroke="#6a8ab0"/><path d="M4 11L12 2L13.5 3.5L5.5 12L3.5 12.5Z" fill="#3a6aa8"/></svg>
  <div class="a" style="left:134px;top:28px;width:551px;height:21px;background:#b2caf0;border-bottom:1px solid #8ea3c8"></div>
  <div class="t" style="left:141px;top:33px;font-size:9.5px;color:#1a2233">Archivo</div>
  <div class="t" style="left:184px;top:33px;font-size:9.5px;color:#1a2233">Opciones</div>
  <div class="t" style="left:234px;top:33px;font-size:9.5px;color:#1a2233">Ayuda</div>
  <div class="a" style="left:134px;top:49px;width:551px;height:23px;background:#fbfbfb"></div>
  <div class="a" style="left:134px;top:49px;width:176px;height:23px;background:#d9d8d3;border-bottom:1px solid #cbcac2"></div>
  <svg class="a" style="left:142px;top:55px" width="11" height="12"><use href="#i-new"/></svg>
  <svg class="a" style="left:164px;top:55px" width="12" height="12"><use href="#i-saveg"/></svg>
  <div class="a" style="left:183px;top:54px;width:2px;height:14px;background:#a4a4a0;border-right:1px solid #f0f0ec"></div>
  <svg class="a" style="left:191px;top:55px" width="15" height="12"><use href="#i-print"/></svg>
  <svg class="a" style="left:215px;top:55px" width="12" height="12"><use href="#i-xg"/></svg>
  <div class="a" style="left:235px;top:54px;width:2px;height:14px;background:#a4a4a0;border-right:1px solid #f0f0ec"></div>
  <svg class="a" style="left:243px;top:53px" width="12" height="14"><use href="#i-refresh"/></svg>
  <div class="a" style="left:263px;top:54px;width:2px;height:14px;background:#a4a4a0;border-right:1px solid #f0f0ec"></div>
  <svg class="a" style="left:269px;top:54px" width="14" height="12"><use href="#i-folder"/></svg>
  <svg class="a" style="left:293px;top:54px" width="13" height="13"><use href="#i-help"/></svg>
  <div class="a" style="left:134px;top:72px;width:551px;height:415px;background:#e5e3d7"></div>
  <div class="t" style="left:145px;top:82px;font-size:9.45px;color:#942a2a">No Conformidad</div>
  <div class="a" style="left:276px;top:79px;width:70px;height:17px;background:#eef0f5;border:1px solid #a9b8cc"></div>
  <div class="t" style="left:276px;top:81px;width:70px;text-align:right;padding-right:3px;font-size:9.45px;color:#9a9a9a">20080183</div>
  <div class="t" style="left:396px;top:82px;font-size:9.45px;color:#222">Código</div>
  <div class="a" style="left:440px;top:79px;width:219px;height:17px;background:#fff;border:1px solid #a9b8cc"></div>
  <div class="t" style="left:440px;top:81px;width:219px;padding-left:2px;font-size:9.45px;color:#111">125836</div>
  <div class="t" style="left:145px;top:103px;font-size:9.45px;color:#942a2a">Fecha Detección</div>
  <div class="a" style="left:276px;top:101px;width:70px;height:16px;background:#fff;border:1px solid #a9b8cc"></div>
  <div class="t" style="left:276px;top:103px;width:70px;padding-left:2px;font-size:9.45px;color:#111">26/05/2009</div>
  <div class="a" style="left:346px;top:101px;width:18px;height:16px;background:linear-gradient(#d8e4f4,#b4c8e8);border:1px solid #9db2d2"></div>
  <svg class="a" style="left:348px;top:104px" width="14" height="10"><rect x="0" y="0" width="13" height="1.5" fill="#333"/><path d="M.5 2V9.5H12.5V2M4.5 2V9.5M8.5 2V9.5M.5 5H12.5M.5 7.5H12.5" fill="none" stroke="#8a8aa8" stroke-width=".8"/><ellipse cx="8" cy="5.5" rx="3.8" ry="2.4" fill="none" stroke="#d02020" stroke-width="1.3"/></svg>
  <div class="t" style="left:145px;top:124px;font-size:9.45px;color:#942a2a">Depart. del que Procede</div>
  <div class="a" style="left:277px;top:122px;width:87px;height:16px;background:#fff;border:1px solid #a9b8cc"></div>
  <div class="t" style="left:277px;top:124px;width:87px;padding-left:2px;font-size:9.45px;color:#111">Atc</div>
  <div class="a" style="left:364px;top:122px;width:18px;height:16px;background:linear-gradient(#d8e4f4,#aec4e6);border:1px solid #9db2d2"></div>
  <svg class="a" style="left:367px;top:124px" width="13" height="12"><rect x=".5" y=".5" width="11" height="9" fill="#f4f6fa" stroke="#2a4a8a"/><circle cx="7" cy="6" r="2.6" fill="none" stroke="#555" stroke-width="1.1"/><path d="M9 8L11.5 11" stroke="#c08a20" stroke-width="1.6"/></svg>
  <div class="t" style="left:390px;top:124px;font-size:9.45px;color:#707070">Atencion al Cliente</div>
  <div class="t" style="left:145px;top:145px;font-size:9.45px;color:#942a2a">Usuario Responsable</div>
  <div class="a" style="left:277px;top:143px;width:87px;height:16px;background:#fff;border:1px solid #a9b8cc"></div>
  <div class="t" style="left:277px;top:145px;width:87px;padding-left:2px;font-size:9.45px;color:#111">adminqsm</div>
  <div class="a" style="left:364px;top:143px;width:18px;height:16px;background:linear-gradient(#d8e4f4,#aec4e6);border:1px solid #9db2d2"></div>
  <svg class="a" style="left:367px;top:145px" width="13" height="12"><rect x=".5" y=".5" width="11" height="9" fill="#f4f6fa" stroke="#2a4a8a"/><circle cx="7" cy="6" r="2.6" fill="none" stroke="#555" stroke-width="1.1"/><path d="M9 8L11.5 11" stroke="#c08a20" stroke-width="1.6"/></svg>
  <div class="t" style="left:390px;top:145px;font-size:9.45px;color:#707070">adminqsm</div>
  <div class="t" style="left:145px;top:164px;font-size:9.45px;color:#942a2a">Origen</div>
  <div class="a" style="left:276px;top:161px;width:104px;height:16px;background:#fff;border:1px solid #8a8a8a;border-top:2px solid #505050;border-left:2px solid #505050"></div>
  <div class="a" style="left:362px;top:163px;width:17px;height:13px;background:#f2f2f2;border:1px solid #b8b8b8"></div>
  <svg class="a" style="left:366px;top:166px" width="10" height="6"><path d="M1 1L5 5L9 1" fill="none" stroke="#222" stroke-width="1.6"/></svg>
  <div class="t" style="left:279px;top:164px;font-size:9.45px;color:#111">Departamento</div>
  <div class="a" style="left:396px;top:161px;width:88px;height:16px;background:#fff;border:1px solid #a9b8cc"></div>
  <div class="t" style="left:396px;top:163px;width:88px;padding-left:2px;font-size:9.45px;color:#111">Atc</div>
  <div class="a" style="left:484px;top:161px;width:18px;height:16px;background:linear-gradient(#d8e4f4,#aec4e6);border:1px solid #9db2d2"></div>
  <svg class="a" style="left:487px;top:163px" width="13" height="12"><rect x=".5" y=".5" width="11" height="9" fill="#f4f6fa" stroke="#2a4a8a"/><circle cx="7" cy="6" r="2.6" fill="none" stroke="#555" stroke-width="1.1"/><path d="M9 8L11.5 11" stroke="#c08a20" stroke-width="1.6"/></svg>
  <div class="t" style="left:509px;top:164px;font-size:9.45px;color:#707070">Atencion al Cliente</div>
  <div class="t" style="left:145px;top:183px;font-size:9.45px;color:#942a2a">Motivo</div>
  <div class="a" style="left:277px;top:180px;width:87px;height:16px;background:#fff;border:1px solid #a9b8cc"></div>
  <div class="t" style="left:277px;top:182px;width:87px;padding-left:2px;font-size:9.45px;color:#111">012</div>
  <div class="a" style="left:364px;top:180px;width:18px;height:16px;background:linear-gradient(#d8e4f4,#aec4e6);border:1px solid #9db2d2"></div>
  <svg class="a" style="left:367px;top:182px" width="13" height="12"><rect x=".5" y=".5" width="11" height="9" fill="#f4f6fa" stroke="#2a4a8a"/><circle cx="7" cy="6" r="2.6" fill="none" stroke="#555" stroke-width="1.1"/><path d="M9 8L11.5 11" stroke="#c08a20" stroke-width="1.6"/></svg>
  <div class="t" style="left:390px;top:183px;font-size:9.45px;color:#707070">Ausencia de Atención Comercial</div>
  <div class="t" style="left:145px;top:204px;font-size:9.45px;color:#222">Norma de Aplicación</div>
  <div class="a" style="left:276px;top:200px;width:104px;height:16px;background:#fff;border:1px solid #8a8a8a;border-top:2px solid #505050;border-left:2px solid #505050"></div>
  <div class="a" style="left:362px;top:202px;width:17px;height:13px;background:#f2f2f2;border:1px solid #b8b8b8"></div>
  <svg class="a" style="left:366px;top:205px" width="10" height="6"><path d="M1 1L5 5L9 1" fill="none" stroke="#222" stroke-width="1.6"/></svg>
  <div class="t" style="left:145px;top:224px;font-size:9.45px;color:#222">Acción Correctiva</div>
  <div class="a" style="left:233px;top:222px;width:70px;height:16px;background:#e6eaf2;border:1px solid #a9b8cc"></div>
  <div class="a" style="left:311px;top:226px;width:11px;height:11px;background:#fff;border:1px solid #555"></div>
  <div class="t" style="left:325px;top:227px;font-size:9.45px;color:#222">Dar de Alta un Acción Correctiva</div>
  <div class="t" style="left:145px;top:245px;font-size:9.45px;color:#942a2a">Coste</div>
  <div class="a" style="left:233px;top:242px;width:70px;height:17px;background:#fff;border:1px solid #a9b8cc"></div>
  <div class="t" style="left:233px;top:244px;width:70px;text-align:right;padding-right:3px;font-size:9.45px;color:#111">7,00</div>
  <div class="t" style="left:145px;top:266px;font-size:9.45px;color:#942a2a">Estado</div>
  <div class="a" style="left:233px;top:263px;width:86px;height:15px;background:#fff;border:1px solid #8a8a8a;border-top:2px solid #505050;border-left:2px solid #505050"></div>
  <div class="a" style="left:301px;top:265px;width:17px;height:12px;background:#f2f2f2;border:1px solid #b8b8b8"></div>
  <svg class="a" style="left:305px;top:267px" width="10" height="6"><path d="M1 1L5 5L9 1" fill="none" stroke="#222" stroke-width="1.6"/></svg>
  <div class="t" style="left:236px;top:265px;font-size:9.45px;color:#111">Abierta</div>
  <div class="t" style="left:352px;top:266px;font-size:9.45px;color:#942a2a">Usuario Creación</div>
  <div class="a" style="left:439px;top:263px;width:70px;height:16px;background:#eceef3;border:1px solid #a9b8cc"></div>
  <div class="t" style="left:439px;top:265px;width:70px;padding-left:2px;font-size:9.45px;color:#a8a8a8">adminqsm</div>
  <div class="a" style="left:509px;top:263px;width:17px;height:16px;background:#dcdcd8;border:1px solid #c4c4c0"></div>
  <svg class="a" style="left:512px;top:265px" width="13" height="12"><rect x=".5" y=".5" width="11" height="9" fill="#f4f6fa" stroke="#999"/><circle cx="7" cy="6" r="2.6" fill="none" stroke="#888" stroke-width="1.1"/><path d="M9 8L11.5 11" stroke="#999" stroke-width="1.6"/></svg>
  <div class="t" style="left:535px;top:266px;font-size:9.45px;color:#707070">adminqsm</div>
  <div class="t" style="left:145px;top:284px;font-size:9.45px;color:#222">Fecha Cierre</div>
  <div class="a" style="left:233px;top:281px;width:70px;height:16px;background:#fff;border:1px solid #a9b8cc"></div>
  <div class="a" style="left:303px;top:281px;width:17px;height:16px;background:linear-gradient(#d8e4f4,#b4c8e8);border:1px solid #9db2d2"></div>
  <svg class="a" style="left:305px;top:284px" width="14" height="10"><rect x="0" y="0" width="13" height="1.5" fill="#333"/><path d="M.5 2V9.5H12.5V2M4.5 2V9.5M8.5 2V9.5M.5 5H12.5M.5 7.5H12.5" fill="none" stroke="#8a8aa8" stroke-width=".8"/><ellipse cx="8" cy="5.5" rx="3.8" ry="2.4" fill="none" stroke="#d02020" stroke-width="1.3"/></svg>
  <div class="t" style="left:352px;top:284px;font-size:9.45px;color:#222">Usuario Cierre</div>
  <div class="a" style="left:439px;top:281px;width:70px;height:16px;background:#eceef3;border:1px solid #a9b8cc"></div>
  <div class="a" style="left:509px;top:281px;width:17px;height:16px;background:#dcdcd8;border:1px solid #c4c4c0"></div>
  <svg class="a" style="left:512px;top:283px" width="13" height="12"><rect x=".5" y=".5" width="11" height="9" fill="#f4f6fa" stroke="#999"/><circle cx="7" cy="6" r="2.6" fill="none" stroke="#888" stroke-width="1.1"/><path d="M9 8L11.5 11" stroke="#999" stroke-width="1.6"/></svg>
  <div class="a" style="left:146px;top:319px;width:513px;height:157px;background:#e8e6da;border:1px solid #a09e94;border-right-color:#9a988c;border-bottom:1px solid #8a887e"></div>
  <div class="a" style="left:146px;top:302px;width:87px;height:19px;background:#e8e6da;border-left:1px solid #a09e94;border-right:1px solid #8a887e;border-top:3px solid #eda431"></div>
  <div class="t" style="left:146px;top:306px;width:87px;text-align:center;font-size:9.45px;color:#111">Descripción</div>
  <div class="a" style="left:237px;top:303px;width:88px;height:17px;background:#efeff4;border:1px solid #a8a8a8;border-bottom:none"></div>
  <div class="t" style="left:237px;top:306px;width:88px;text-align:center;font-size:9.45px;color:#111">Causa</div>
  <div class="a" style="left:329px;top:303px;width:87px;height:17px;background:#efeff4;border:1px solid #a8a8a8;border-bottom:none"></div>
  <div class="t" style="left:329px;top:306px;width:87px;text-align:center;font-size:9.45px;color:#111">Solución</div>
  <div class="a" style="left:422px;top:303px;width:86px;height:17px;background:#efeff4;border:1px solid #a8a8a8;border-bottom:none"></div>
  <div class="t" style="left:422px;top:306px;width:86px;text-align:center;font-size:9.45px;color:#111">Verificación</div>
  <div class="a" style="left:153px;top:329px;width:494px;height:132px;background:#fff;border:1px solid #a0b2bc;border-top-color:#b4c4cc"></div>
  <div class="a" style="left:629px;top:330px;width:17px;height:130px;background:linear-gradient(90deg,#fff,#f6f6f6)"></div>
  <svg class="a" style="left:632px;top:345px" width="12" height="7"><path d="M1 6L6 1L11 6" fill="none" stroke="#c8c8c8" stroke-width="1.5"/></svg>
  <svg class="a" style="left:632px;top:437px" width="12" height="7"><path d="M1 1L6 6L11 1" fill="none" stroke="#c8c8c8" stroke-width="1.5"/></svg>
  <div class="t" style="left:155px;top:332px;font-size:9.45px;color:#111">Al cliente le mandan 100 dossier tamaño folio y ellos necesitan tamaño a4</div>
  <div class="a" style="left:3px;top:488px;width:683px;height:11px;background:#f0f0f0;border-top:1px solid #dadada"></div>
  <svg class="a" style="left:609px;top:494px" width="10" height="10"><circle cx="5" cy="5" r="4.5" fill="#3a6ab8"/><circle cx="5" cy="4" r="2" fill="#cfe0f8"/></svg>
  <div class="t" style="left:622px;top:493px;font-size:10.5px;color:#222">100%</div>
  <div class="a" style="left:661px;top:497px;width:7px;height:2px;background:#333"></div>
</div>
</body></html>
